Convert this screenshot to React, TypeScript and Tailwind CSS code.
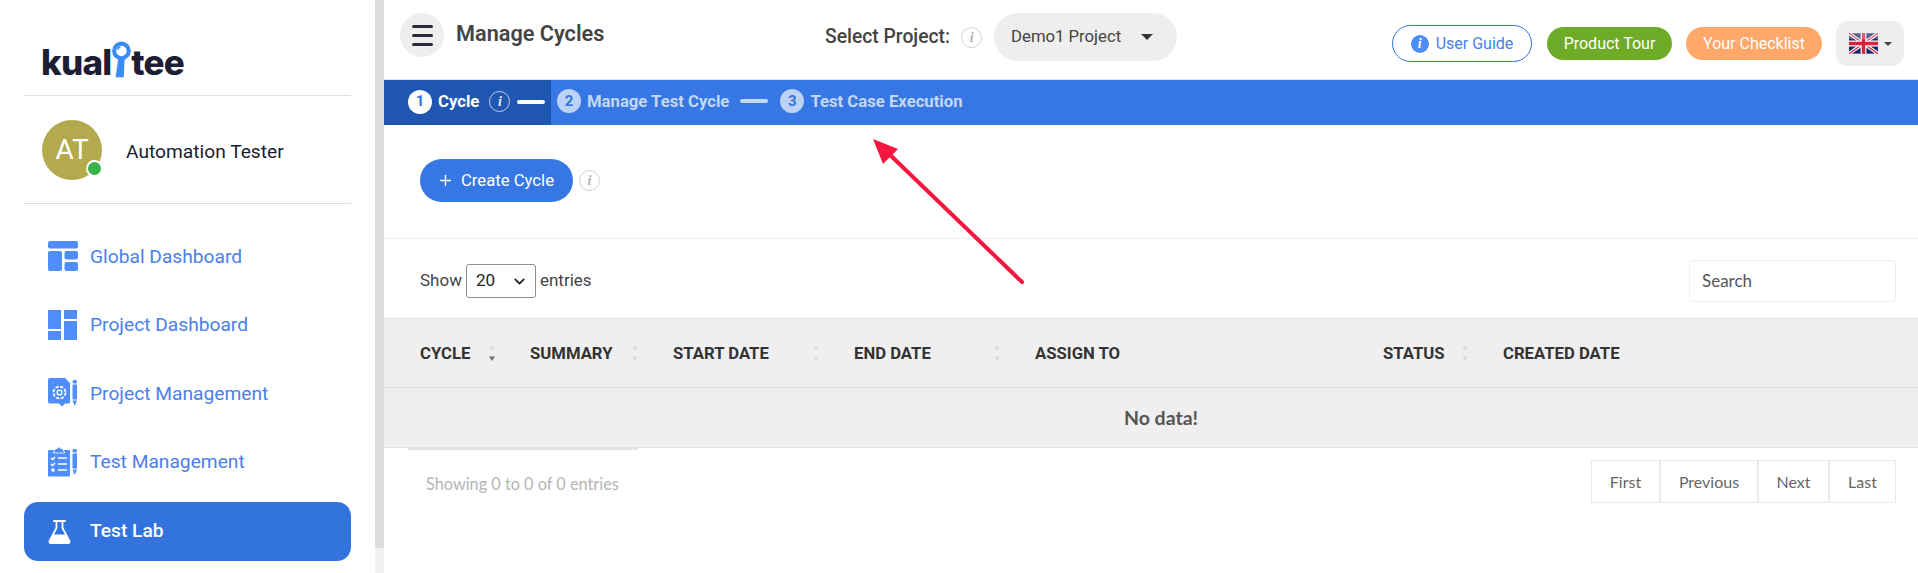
import { ChevronDown, Plus } from "lucide-react";

const navItems = [
  { label: "Global Dashboard", icon: <GlobalIcon /> },
  { label: "Project Dashboard", icon: <ProjectIcon /> },
  { label: "Project Management", icon: <ManageIcon /> },
  { label: "Test Management", icon: <ClipboardIcon /> },
];

const columns = [
  { label: "CYCLE", width: "w-[146px] pl-[36px]", sort: "active" },
  { label: "SUMMARY", width: "w-[143px]", sort: "idle" },
  { label: "START DATE", width: "w-[181px]", sort: "idle" },
  { label: "END DATE", width: "w-[181px]", sort: "idle" },
  { label: "ASSIGN TO", width: "w-[348px]", sort: "none" },
  { label: "STATUS", width: "w-[120px]", sort: "idle" },
  { label: "CREATED DATE", width: "", sort: "none" },
];

function GlobalIcon() {
  return (
    <svg viewBox="0 0 30 30" className="h-[30px] w-[30px]" fill="#4f8dfb">
      <rect x="0" y="0" width="30" height="7.5" rx="2" />
      <rect x="0" y="10" width="14" height="20" rx="2" />
      <rect x="16.5" y="10" width="13.5" height="8.5" rx="2" />
      <rect x="16.5" y="21" width="13.5" height="9" rx="2" />
    </svg>
  );
}

function ProjectIcon() {
  return (
    <svg viewBox="0 0 30 30" className="h-[30px] w-[30px]" fill="#4f8dfb">
      <rect x="0" y="0" width="13" height="19" />
      <rect x="0" y="21" width="13" height="9" />
      <rect x="16" y="0" width="13" height="9" />
      <rect x="16" y="11" width="13" height="19" />
    </svg>
  );
}

function Pencil() {
  return (
    <g fill="#4f8dfb">
      <rect x="24.5" y="2" width="4.5" height="3.5" rx="1.5" />
      <rect x="24.5" y="6.5" width="4.5" height="15" />
      <path d="M24.5 22.5h4.5l-2.25 5.5z" />
    </g>
  );
}

function ManageIcon() {
  return (
    <svg viewBox="0 0 30 30" className="h-[30px] w-[30px]">
      <path
        d="M2 0h15l5 5v19a1.5 1.5 0 0 1-1.5 1.5h-3.5l-3 3-3-3H2a2 2 0 0 1-2-2V2a2 2 0 0 1 2-2z"
        fill="#4f8dfb"
      />
      <circle cx="11.5" cy="14.5" r="6" fill="none" stroke="#fff" strokeWidth="1.7" strokeDasharray="3.2 1.5" />
      <circle cx="11.5" cy="14.5" r="2.4" fill="none" stroke="#fff" strokeWidth="1.4" />
      <Pencil />
    </svg>
  );
}

function ClipboardIcon() {
  return (
    <svg viewBox="0 0 30 30" className="h-[30px] w-[30px]">
      <rect x="0" y="3" width="22" height="26.5" rx="1" fill="#4f8dfb" />
      <path d="M7 3V1.5h2.5a1.5 1.5 0 0 1 3 0H15V3l1.5 2v1h-11V5z" fill="#4f8dfb" stroke="#fff" strokeWidth="0.8" />
      <g stroke="#fff" strokeWidth="1.5" fill="none">
        <path d="M3 11l1.5 1.5L7 10M3 17l1.5 1.5L7 16" />
        <path d="M10 11h9M10 17h9M10 23h9" />
      </g>
      <rect x="3.5" y="21.5" width="3" height="3" fill="#fff" />
      <Pencil />
    </svg>
  );
}

function FlaskIcon() {
  return (
    <svg viewBox="0 0 23 24" className="h-6 w-[23px]">
      <path d="M6 1h11" stroke="#fff" strokeWidth="2" strokeLinecap="round" />
      <path d="M8.5 1.5v6.5L1.5 21a1.5 1.5 0 0 0 1.4 2h17.2a1.5 1.5 0 0 0 1.4-2L14.5 8V1.5" fill="none" stroke="#fff" strokeWidth="1.8" />
      <path d="M5.2 14.5h12.6L22 22.2l-1 1.6H2l-1-1.6z" fill="#fff" />
    </svg>
  );
}

function InfoDot({ light }: { light?: boolean }) {
  return (
    <span
      className={`flex h-[21px] w-[21px] shrink-0 items-center justify-center rounded-full border text-[14px] font-bold italic [font-family:'Liberation_Serif',serif] ${
        light ? "border-[#c4cfdf] text-[#e4ebf7]" : "border-[#cfcfcf] text-[#b5b5b5]"
      }`}
    >
      i
    </span>
  );
}

function SortCaret({ active }: { active?: boolean }) {
  return (
    <svg viewBox="0 0 8 18" className="h-[18px] w-2 shrink-0">
      <path d="M4 1l3 4.5H1z" fill="#dcdcdc" />
      <path d="M4 17l3-4.5H1z" fill={active ? "#6f6f7a" : "#dcdcdc"} />
    </svg>
  );
}

function UkFlag() {
  return (
    <svg viewBox="0 0 60 42" className="h-[23px] w-[29px]">
      <rect width="60" height="42" fill="#1b2a6b" />
      <path d="M0 0l60 42M60 0L0 42" stroke="#fff" strokeWidth="7" />
      <path d="M0 0l60 42M60 0L0 42" stroke="#d8203a" strokeWidth="2.5" />
      <path d="M30 0v42M0 21h60" stroke="#fff" strokeWidth="12" />
      <path d="M30 0v42M0 21h60" stroke="#e01f3d" strokeWidth="7" />
      <rect width="60" height="12" fill="#fff" opacity="0.25" />
    </svg>
  );
}

function Logo() {
  return (
    <div className="flex items-end pl-[41px] text-[35px] leading-[36px] font-extrabold tracking-[-0.8px] text-[#1d1d33] [font-family:Inter,sans-serif]">
      <span>kual</span>
      <svg viewBox="0 0 22 40" className="mb-[1px] h-[38px] w-[20px]">
        <circle cx="11.5" cy="10" r="8" fill="none" stroke="#3b8bf5" strokeWidth="4.5" />
        <path d="M8 19h7l-1 20H5z" fill="#3b8bf5" />
        <path d="M7.5 9a4 4 0 0 1 3-3.5" stroke="#3b8bf5" strokeWidth="1.5" fill="none" />
      </svg>
      <span>tee</span>
    </div>
  );
}

function Sidebar() {
  return (
    <aside className="flex w-[384px] shrink-0 bg-white">
      <div className="w-[375px]">
        <div className="flex h-[95px] items-end pb-[15px]">
          <Logo />
        </div>
        <div className="mx-6 border-t border-[#dddddd]" />
        <div className="mx-6 flex h-[108px] items-center border-b border-[#dddddd] pl-[18px]">
          <div className="relative flex h-[60px] w-[60px] items-center justify-center rounded-full bg-[#b3a94d] text-[28px] text-white">
            AT
            <span className="absolute right-[-1px] bottom-[3px] h-[17px] w-[17px] rounded-full border-2 border-white bg-[#37b34a]" />
          </div>
          <span className="mt-[5px] ml-6 text-[19.2px] text-[#1c1c30]">Automation Tester</span>
        </div>
        <nav className="mx-6 mt-[18px] flex flex-col">
          {navItems.map((item) => (
            <a key={item.label} className="flex h-[68.5px] items-center pl-6 text-[19.2px] text-[#4a80ec]">
              {item.icon}
              <span className="mt-[2px] ml-3">{item.label}</span>
            </a>
          ))}
          <a className="mt-[6px] flex h-[59px] items-center rounded-[14px] bg-[#3373dd] pl-6 text-[19.2px] font-medium text-white">
            <FlaskIcon />
            <span className="ml-[19px]">Test Lab</span>
          </a>
        </nav>
      </div>
      <div className="flex w-[9px] flex-col bg-[#f1f1f1]">
        <div className="h-[548px] bg-[#dcdcdc]" />
      </div>
    </aside>
  );
}

function TopBar() {
  return (
    <header className="flex h-[79px] items-center pb-[9px] text-[#444444]">
      <div className="flex w-[441px] items-center pl-4">
        <button className="flex h-11 w-11 flex-col items-center justify-center gap-[6px] rounded-full bg-[#eeeeee]">
          <span className="h-[3px] w-[21px] rounded-sm bg-[#2b2b3a]" />
          <span className="h-[3px] w-[21px] rounded-sm bg-[#2b2b3a]" />
          <span className="h-[3px] w-[21px] rounded-sm bg-[#2b2b3a]" />
        </button>
        <h1 className="mb-[1px] ml-3 text-[21.7px] font-semibold">Manage Cycles</h1>
      </div>
      <div className="mt-1 flex items-center">
        <span className="text-[19.3px] font-medium">Select Project:</span>
        <span className="ml-[11px]">
          <InfoDot />
        </span>
        <div className="ml-3 flex h-12 w-[183px] items-center rounded-full bg-[#eeeeee] pl-[17px] text-[16.7px]">
          Demo1 Project
          <span className="ml-5 h-0 w-0 border-x-[6px] border-t-[6px] border-x-transparent border-t-[#333333]" />
        </div>
      </div>
      <div className="mt-[17px] ml-auto flex items-center pr-[14px]">
        <button className="flex h-[37px] w-[140px] items-center justify-center gap-[7px] rounded-full border border-[#3373dd] text-[16px] text-[#4a80ec]">
          <span className="flex h-[18px] w-[18px] items-center justify-center rounded-full bg-[#4f8dfb] text-[14px] font-bold text-white italic [font-family:'Liberation_Serif',serif]">
            i
          </span>
          User Guide
        </button>
        <button className="ml-[15px] h-[33px] w-[125px] rounded-full bg-[#6eac28] text-[16px] text-white">Product Tour</button>
        <button className="ml-[14px] h-[33px] w-[136px] rounded-full bg-[#ffa869] text-[16px] text-white">Your Checklist</button>
        <button className="ml-[14px] flex h-[45px] w-[68px] items-center gap-[6px] rounded-xl bg-[#eeeeee] pl-[13px]">
          <UkFlag />
          <span className="h-0 w-0 border-x-[4px] border-t-[4px] border-x-transparent border-t-[#444444]" />
        </button>
      </div>
    </header>
  );
}

function StepNumber({ n, active }: { n: number; active?: boolean }) {
  return (
    <span
      className={`flex h-6 w-6 shrink-0 items-center justify-center rounded-full text-[15px] ${
        active ? "bg-white text-[#3373dd]" : "bg-[#bcd2f6] text-[#3373dd]"
      }`}
    >
      {n}
    </span>
  );
}

function Steps() {
  return (
    <div className="flex h-[46px] items-center border-t border-[#e2e2e2] bg-[#3677e3] text-[16.7px] font-bold text-[#c3d7f8]">
      <div className="flex h-full w-[167px] items-center bg-[#1e56b2] pb-[2px] pl-6 text-white">
        <StepNumber n={1} active />
        <span className="ml-[6px]">Cycle</span>
        <span className="ml-[10px]">
          <InfoDot light />
        </span>
        <span className="ml-[7px] h-1 w-7 rounded-full bg-white" />
      </div>
      <div className="mb-[2px] ml-[6px] flex items-center">
        <StepNumber n={2} />
        <span className="ml-[6px]">Manage Test Cycle</span>
        <span className="ml-[11px] h-1 w-7 rounded-full bg-[#c3d7f8]" />
        <span className="ml-3">
          <StepNumber n={3} />
        </span>
        <span className="ml-[6px]">Test Case Execution</span>
      </div>
    </div>
  );
}

function CyclesTable() {
  return (
    <table className="w-full table-fixed border-collapse bg-[#efefef] text-left">
      <thead>
        <tr className="h-[69px] border-y border-[#e3e3e3] border-b-[#dcdcdc] text-[16.7px] font-bold text-[#333333]">
          {columns.map((col) => (
            <th key={col.label} className={`${col.width} font-bold`}>
              <div className="flex items-center justify-between pt-[1px] pr-[34px]">
                {col.label}
                {col.sort !== "none" && <SortCaret active={col.sort === "active"} />}
              </div>
            </th>
          ))}
        </tr>
      </thead>
      <tbody>
        <tr className="h-[60px] border-b border-[#e3e3e3]">
          <td colSpan={7} className="pl-[20px] text-center text-[19.5px] font-bold text-[#555555] [font-family:Lato,sans-serif]">
            No data!
          </td>
        </tr>
      </tbody>
    </table>
  );
}

function Pager() {
  const pages = [
    { label: "First", width: "w-[69px]" },
    { label: "Previous", width: "w-[98px]" },
    { label: "Next", width: "w-[71px]" },
    { label: "Last", width: "w-[67px]" },
  ];
  return (
    <div className="flex">
      {pages.map((p) => (
        <button
          key={p.label}
          className={`${p.width} h-[43px] border border-[#e9e9e9] text-[16px] text-[#666666] [font-family:Lato,sans-serif]`}
        >
          {p.label}
        </button>
      ))}
    </div>
  );
}

// red annotation arrow laid over the page
function Arrow() {
  return (
    <svg className="pointer-events-none absolute top-[130px] left-[860px] h-[160px] w-[175px]" viewBox="0 0 175 160">
      <path d="M162 152L26 21" stroke="#f5173f" strokeWidth="4" strokeLinecap="round" />
      <path d="M13 9l10 25 15-15z" fill="#f5173f" />
    </svg>
  );
}

export default function App() {
  return (
    <div className="relative flex h-[573px] w-[1918px] overflow-hidden bg-white [font-family:Roboto,sans-serif]">
      <Sidebar />
      <main className="min-w-0 flex-1">
        <TopBar />
        <Steps />
        <div className="flex h-[114px] items-center border-b border-[#eeeeee] pb-[2px] pl-9">
          <button className="flex h-[43px] w-[153px] items-center justify-center gap-[7px] rounded-full bg-[#3677e3] pr-[2px] text-[16.7px] text-white">
            <Plus size={17} strokeWidth={2} />
            Create Cycle
          </button>
          <span className="ml-[6px]">
            <InfoDot />
          </span>
        </div>
        <div className="flex h-[79px] items-center justify-between pt-[5px] pr-[22px] pl-9 text-[17px] text-[#444444]">
          <div className="flex items-center">
            Show
            <div className="mx-1 flex h-[34px] w-[70px] items-center justify-between rounded-[3px] border border-[#8f8f8f] pr-[7px] pl-[9px] text-[#222222]">
              20
              <ChevronDown size={17} strokeWidth={2.5} />
            </div>
            entries
          </div>
          <div className="flex h-[42px] w-[207px] items-center rounded-[3px] border border-[#eeeeee] pl-3 text-[17px] text-[#555555] [font-family:Lato,sans-serif]">
            Search
          </div>
        </div>
        <CyclesTable />
        <div className="ml-6 h-[2px] w-[230px] bg-[#e4e4e4]" />
        <div className="flex items-start justify-between pt-[10px] pr-[22px] pl-[42px]">
          <span className="pt-[12px] text-[16.3px] text-[#b5b5b5] [font-family:Lato,sans-serif]">Showing 0 to 0 of 0 entries</span>
          <Pager />
        </div>
      </main>
      <Arrow />
    </div>
  );
}
